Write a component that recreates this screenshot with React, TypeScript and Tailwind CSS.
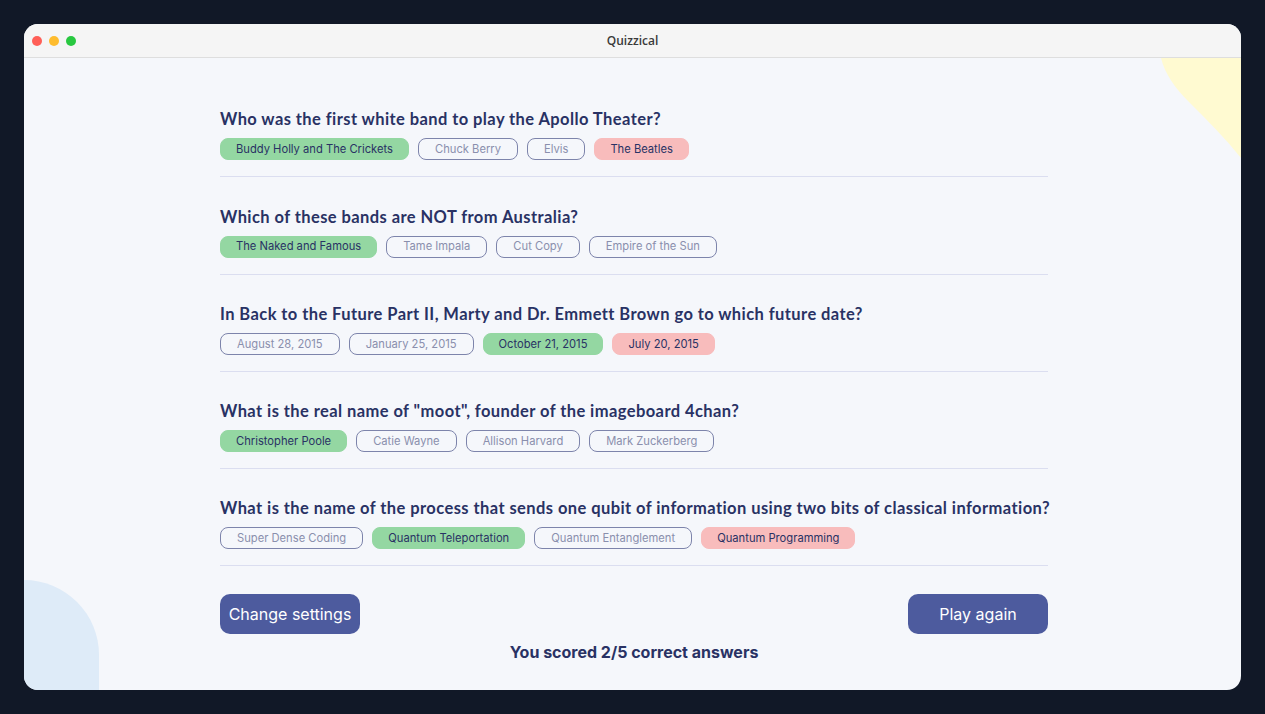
import React from "react";

type Ans = { text: string; state: "correct" | "wrong" | "idle" };
type Q = { q: string; answers: Ans[] };

const questions: Q[] = [
  {
    q: "Who was the first white band to play the Apollo Theater?",
    answers: [
      { text: "Buddy Holly and The Crickets", state: "correct" },
      { text: "Chuck Berry", state: "idle" },
      { text: "Elvis", state: "idle" },
      { text: "The Beatles", state: "wrong" },
    ],
  },
  {
    q: "Which of these bands are NOT from Australia?",
    answers: [
      { text: "The Naked and Famous", state: "correct" },
      { text: "Tame Impala", state: "idle" },
      { text: "Cut Copy", state: "idle" },
      { text: "Empire of the Sun", state: "idle" },
    ],
  },
  {
    q: "In Back to the Future Part II, Marty and Dr. Emmett Brown go to which future date?",
    answers: [
      { text: "August 28, 2015", state: "idle" },
      { text: "January 25, 2015", state: "idle" },
      { text: "October 21, 2015", state: "correct" },
      { text: "July 20, 2015", state: "wrong" },
    ],
  },
  {
    q: 'What is the real name of "moot", founder of the imageboard 4chan?',
    answers: [
      { text: "Christopher Poole", state: "correct" },
      { text: "Catie Wayne", state: "idle" },
      { text: "Allison Harvard", state: "idle" },
      { text: "Mark Zuckerberg", state: "idle" },
    ],
  },
  {
    q: "What is the name of the process that sends one qubit of information using two bits of classical information?",
    answers: [
      { text: "Super Dense Coding", state: "idle" },
      { text: "Quantum Teleportation", state: "correct" },
      { text: "Quantum Entanglement", state: "idle" },
      { text: "Quantum Programming", state: "wrong" },
    ],
  },
];

function Pill({ a }: { a: Ans }) {
  const base =
    "h-[22px] pt-[1px] rounded-[8px] flex items-center text-[11.2px] leading-none font-['Inter',sans-serif] border";
  if (a.state === "correct")
    return <div className={base + " px-[15px] bg-[#94D7A2] border-[#94D7A2] text-[#293264]"}>{a.text}</div>;
  if (a.state === "wrong")
    return <div className={base + " px-[15px] bg-[#F8BCBC] border-[#F8BCBC] text-[#293264]"}>{a.text}</div>;
  return <div className={base + " px-[16px] border-[#7D84AB] text-[#8A8FAD] bg-transparent"}>{a.text}</div>;
}

export default function App() {
  return (
    <div className="min-h-screen w-full bg-[#111827] p-[24px]">
      <div className="relative h-[666px] w-full rounded-[14px] overflow-hidden bg-[#F5F7FB] flex flex-col">
        <div className="relative h-[34px] shrink-0 bg-[#F5F5F5] border-b border-[#DEDEDE] flex items-center justify-center">
          <div className="absolute left-[8px] top-[12px] flex gap-[7px]">
            <span className="w-[10px] h-[10px] rounded-full bg-[#FF5F57]" />
            <span className="w-[10px] h-[10px] rounded-full bg-[#FEBC2E]" />
            <span className="w-[10px] h-[10px] rounded-full bg-[#28C840]" />
          </div>
          <span className="text-[12px] font-semibold text-[#3A3A3A] font-['Open_Sans',sans-serif]">Quizzical</span>
        </div>
        <div className="relative flex-1 overflow-hidden">
          <svg
            className="absolute right-0 top-0"
            width="80"
            height="100"
            viewBox="0 0 80 100"
          >
            <path d="M0 0 C 4 16, 14 30, 28 44 C 46 62, 64 80, 80 100 L 80 0 Z" fill="#FFFAD1" />
          </svg>
          <div className="absolute left-[-75px] bottom-[-110px] w-[150px] h-[220px] rounded-full bg-[#DEEBF8]" />
          <div className="relative ml-[196px] w-[828px] pt-[22px]">
            {questions.map((q, i) => (
              <div key={i} className="pt-[30.25px] pb-[16px] border-b border-[#DBDEF0]">
                <h2 className="text-[16.5px] leading-[18px] font-bold text-[#293264] font-['Lato',sans-serif] tracking-[0.42px] whitespace-nowrap">
                  {q.q}
                </h2>
                <div className="mt-[10px] flex gap-[9px]">
                  {q.answers.map((a, j) => (
                    <Pill key={j} a={a} />
                  ))}
                </div>
              </div>
            ))}
            <div className="mt-[28px] flex justify-between">
              <button className="w-[140px] h-[40px] rounded-[10px] bg-[#4D5B9E] text-white text-[16px] font-['Inter',sans-serif]">
                Change settings
              </button>
              <button className="w-[140px] h-[40px] rounded-[10px] bg-[#4D5B9E] text-white text-[16px] font-['Inter',sans-serif]">
                Play again
              </button>
            </div>
            <p className="mt-[8px] text-center text-[16px] leading-[20px] font-bold text-[#293264] font-['Inter',sans-serif]">
              You scored 2/5 correct answers
            </p>
          </div>
        </div>
      </div>
    </div>
  );
}
